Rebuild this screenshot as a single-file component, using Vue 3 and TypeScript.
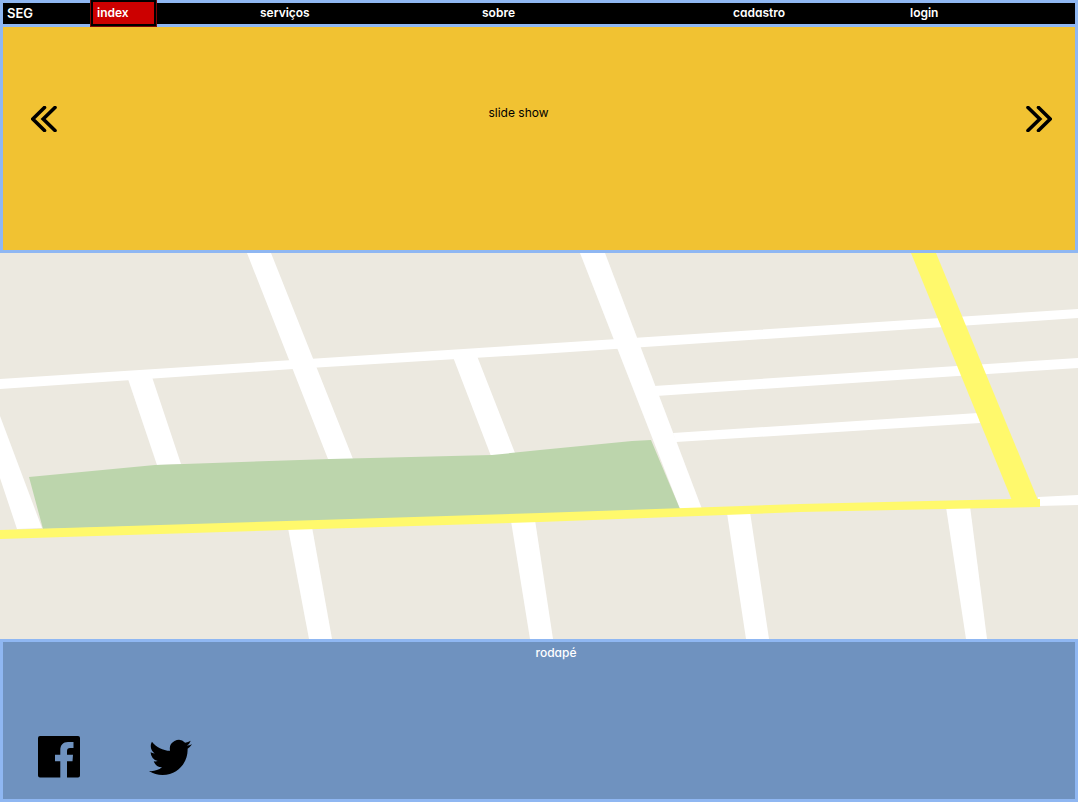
<script setup lang="ts">
import { ref } from 'vue'

interface NavItem {
  id: string
  label: string
}

const items: NavItem[] = [
  { id: 'index', label: 'index' },
  { id: 'servicos', label: 'serviços' },
  { id: 'sobre', label: 'sobre' },
  { id: 'cadastro', label: 'cadastro' },
  { id: 'login', label: 'login' },
]

const current = ref<string>('index')

const roads: string[] = [
  '0,126 293,107 540,91 1078,56 1078,65 540,101 293,116 0,136',
  '247,0 271,0 353,206 328,206',
  '128,126 152,124 181,211 157,212',
  '0,163 42,275 17,276 0,225',
  '453,104 477,103 515,200 491,203',
  '580,0 605,0 702,256 680,256',
  '654,133 1078,105 1078,115 656,143',
  '673,180 978,160 980,170 676,189',
  '1038,244 1078,242 1078,252 1038,253',
  '288,275 312,274 332,386 309,386',
  '511,268 535,267 553,386 530,386',
  '727,260 750,259 769,386 746,386',
  '946,254 970,253 987,386 966,386',
]
</script>

<template>
  <div class="page">
    <header class="top">
      <span class="brand">SEG</span>
      <nav class="menu" aria-label="principal">
        <a
          v-for="item in items"
          :key="item.id"
          :href="'#' + item.id"
          class="link"
          :class="{ active: item.id === current }"
          @click="current = item.id"
        >{{ item.label }}</a>
      </nav>
    </header>

    <section class="slides">
      <button class="arrow" type="button" aria-label="anterior">
        <svg viewBox="0 0 26 26" aria-hidden="true">
          <path d="M13.5 1.5 1.8 13 13.5 24.5M24 1.5 12.2 13 24 24.5" />
        </svg>
      </button>
      <p class="caption">slide show</p>
      <button class="arrow" type="button" aria-label="próximo">
        <svg viewBox="0 0 26 26" aria-hidden="true">
          <path d="M2 1.5 13.8 13 2 24.5M12.5 1.5 24.2 13 12.5 24.5" />
        </svg>
      </button>
    </section>

    <svg class="map" viewBox="0 0 1078 386" aria-label="mapa" role="img">
      <polygon v-for="road in roads" :key="road" :points="road" class="road" />
      <polygon class="park" points="29,224 155,212 330,206 492,202 540,197 632,188 651,187 680,256 540,262 43,276" />
      <polygon class="avenue" points="0,277 540,260 800,251 1013,246 1040,246 1040,254 800,259 540,269 0,286" />
      <polygon class="avenue" points="911,0 936,0 1040,252 1013,250" />
    </svg>

    <footer class="bottom">
      <p class="foot-label">rodapé</p>
      <div class="social">
        <a href="#facebook" aria-label="Facebook">
          <svg class="facebook" viewBox="0 0 42 42" aria-hidden="true">
            <path d="M2 0H40Q42 0 42 2V39.500Q42 41.500 40 41.500H29V25.300H34.500L35 18.700H29V15C29 13 30 12 32 12H35.500V6H30C25 6 22.300 9 22.300 14V18.700H17V25.300H22.300V41.500H2Q0 41.500 0 39.500V2Q0 0 2 0Z" />
          </svg>
        </a>
        <a href="#twitter" aria-label="Twitter">
          <svg class="twitter" viewBox="0 0 24 24" aria-hidden="true">
            <path d="M23.953 4.57a10 10 0 01-2.825.775 4.958 4.958 0 002.163-2.723c-.951.555-2.005.959-3.127 1.184a4.92 4.92 0 00-8.384 4.482C7.69 8.095 4.067 6.13 1.64 3.162a4.822 4.822 0 00-.666 2.475c0 1.71.87 3.213 2.188 4.096a4.904 4.904 0 01-2.228-.616v.06a4.923 4.923 0 003.946 4.827 4.996 4.996 0 01-2.212.085 4.936 4.936 0 004.604 3.417 9.867 9.867 0 01-6.102 2.105c-.39 0-.779-.023-1.17-.067a13.995 13.995 0 007.557 2.209c9.053 0 13.998-7.496 13.998-13.985 0-.21 0-.42-.015-.63A9.935 9.935 0 0024 4.59z" />
          </svg>
        </a>
      </div>
    </footer>
  </div>
</template>

<style>
body {
  margin: 0;
}
</style>

<style scoped>
.page {
  display: flex;
  flex-direction: column;
  min-height: 100vh;
  font-family: Inter, "Liberation Sans", sans-serif;
  font-feature-settings: "cv11";
  font-size: 12px;
  line-height: 20px;
  color: #000;
}

.top {
  display: grid;
  grid-template-columns: 88fr 984fr;
  border: 3px solid #8fb7f2;
  background: #000;
  color: #fff;
  font-weight: 600;
}

.brand {
  padding-left: 4px;
  font-size: 13px;
}

.menu {
  display: grid;
  grid-template-columns: 163fr 222fr 251fr 177fr 171fr;
  justify-items: start;
  padding-bottom: 1px;
}

.link {
  padding: 0 6px;
  color: inherit;
  text-decoration: none;
}

.link.active {
  box-sizing: border-box;
  min-width: 65px;
  margin: -3px 0;
  padding: 1px 4px;
  border: 2px solid #000;
  background: #c00;
  box-shadow: 0 0 0 1px #7a0505;
}

.slides {
  display: grid;
  grid-template-columns: auto 1fr auto;
  align-items: start;
  box-sizing: border-box;
  min-height: 226px;
  padding: 76px 23px 0 28px;
  border: 3px solid #8fb7f2;
  border-top: 0;
  background: #f1c232;
}

.arrow {
  width: 26px;
  height: 26px;
  margin-top: 3px;
  padding: 0;
  border: 0;
  background: none;
  cursor: pointer;
}

.arrow svg {
  display: block;
  width: 100%;
  height: 100%;
  fill: none;
  stroke: #000;
  stroke-width: 3.6;
  stroke-linecap: round;
}

.caption {
  margin: 0;
  padding-right: 46px;
  text-align: center;
}

.map {
  display: block;
  width: 100%;
  height: auto;
  background: #ece9e0;
}

.road {
  fill: #fff;
}

.park {
  fill: #bcd5ac;
}

.avenue {
  fill: #fff96c;
}

.bottom {
  display: flex;
  flex: 1;
  flex-direction: column;
  justify-content: space-between;
  box-sizing: border-box;
  min-height: 162px;
  border: 3px solid #8fb7f2;
  background: #6f92bf;
}

.foot-label {
  margin: 0;
  padding: 1px 0 0 34px;
  color: #fff;
  font-weight: 500;
  text-align: center;
}

.social {
  display: flex;
  gap: 69px;
  padding: 0 35px 20px;
}

.social svg {
  display: block;
}

.facebook {
  width: 42px;
  height: 42px;
}

.twitter {
  width: 43px;
  height: 43px;
}
</style>
